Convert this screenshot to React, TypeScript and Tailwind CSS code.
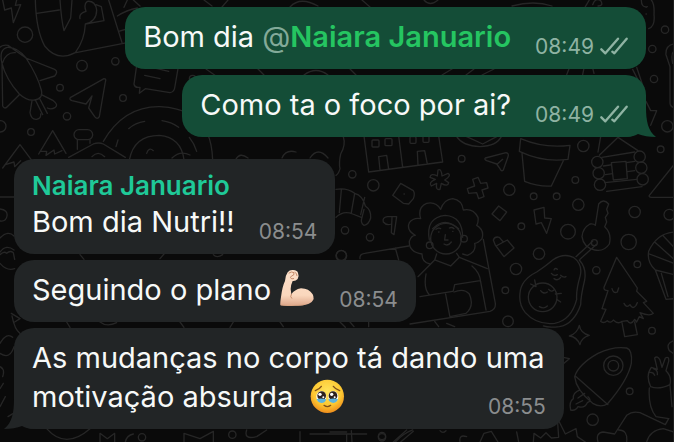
import type { ReactNode } from "react"

// doodle wallpaper behind the chat
function Wallpaper() {
  return (
    <svg
      className="absolute top-0 left-0 w-full h-full"
      viewBox="0 0 674 442"
      preserveAspectRatio="xMinYMin slice"
      fill="none"
      stroke="#262626"
      strokeLinecap="round"
      strokeLinejoin="round"
      aria-hidden="true"
    >
      {/* top left */}
      <g transform="scale(.33333)" strokeWidth="4">
        <path d="M8 0 14 30 34 24 40 68 62 14 46 16 50 0" />
        <circle cx="75" cy="104" r="23" />
        <path d="M106 0 Q108 90 134 138 Q172 186 226 158 Q254 120 256 72 M110 40 178 30 M180 0 Q184 60 192 92 L212 54 216 0 M256 72 Q290 64 290 30 Q286 2 262 4 Q250 12 258 34 Q236 40 240 56 M256 72 312 62 304 20 288 14 M228 158 382 128" />
        <path d="M326 0 366 128 M352 48 Q380 30 412 24 M356 94 390 84 M372 22 382 0 M400 0 420 18" />
        <path d="M6 190 Q-4 148 22 142 Q52 140 78 174 Q112 226 124 270 Q130 296 104 300 Q82 304 58 282 Q18 238 6 190Z M8 188 Q18 156 46 158 M-8 150 Q4 132 24 136 L78 174 164 208 Q176 214 164 228 L120 242 M6 190 8 318 Q14 330 24 318 L58 284" />
        <path d="M96 302 90 338 Q94 360 110 358 Q124 356 122 342 M106 300 128 344 M118 294 142 340 M124 284 160 302 Q176 314 166 322 Q154 330 142 324" />
        <circle cx="246" cy="197" r="16" /><circle cx="346" cy="184" r="11" />
        <circle cx="180" cy="263" r="10" /><circle cx="201" cy="349" r="11" />
        <circle cx="369" cy="294" r="10" /><circle cx="93" cy="396" r="10" />
        <circle cx="1" cy="379" r="17" /><circle cx="578" cy="236" r="10" />
        <path d="M212 292 312 236 Q320 236 316 246 L298 350 Q292 360 284 350 L266 324 276 288 258 312 216 302 Q206 298 212 292Z" />
        <path d="M410 196 402 252 Q404 262 414 262 L420 262 418 280 436 266 510 278 Q522 276 524 264 L534 206 M430 196 506 214 M434 226 480 236" />
        <path d="M310 424 Q372 318 480 320 Q590 326 622 400 Q636 430 638 480 M386 386 Q406 368 434 364 M486 362 Q514 366 536 382 M568 412 Q584 432 590 454 M348 440 354 420 M388 480 Q402 406 478 406 Q544 412 552 480 M440 460 Q446 440 460 452" />
        <rect x="222" y="389" width="56" height="30" rx="15" />
        <path d="M232 420 V448 M270 420 V430 M206 472 280 432 Q296 426 310 432 L376 472 M276 470 Q294 450 314 470" />
        <path d="M116 462 158 392 198 460 M120 454 140 454 138 466 162 450 164 462 186 452 M8 504 60 434 102 490 M16 494 42 486 44 500 62 482" />
      </g>

      {/* right side, top */}
      <g transform="translate(554) scale(.33333)" strokeWidth="4">
        <path d="M94 20 106 0 M116 14 Q124 -8 140 2 Q150 18 132 18 M262 0 Q262 24 280 20 M284 86 Q304 78 300 44 Q302 12 292 0 M276 42 h1 M276 22 h1" />
        <circle cx="333" cy="89" r="11" /><circle cx="295" cy="147" r="11" />
        <circle cx="300" cy="237" r="11" /><circle cx="340" cy="379" r="17" />
        <circle cx="320" cy="448" r="10" />
        <path d="M360 132 Q334 136 336 164 L348 200 V310 Q350 322 360 322 M360 154 Q350 158 356 190" />
        <path d="M236 208 262 260 M248 202 264 250 M276 304 290 332 308 332 290 376" />
        <path d="M38 224 46 204 M86 224 90 204 M116 204 120 220" />
      </g>

      {/* strip between the sent bubbles and above them */}
      <path strokeWidth="1.3" d="M204 0 212 6 M228 0 222 7 M290 7 Q300 -4 318 6 M362 0 370 7 M424 0 Q430 7 438 0 M512 6 Q534 0 552 6 M206 69 216 76 M258 69 264 75 M304 75 Q316 66 328 75 M350 69 356 75 M442 75 452 69 M466 75 474 69 M482 75 494 69" />

      {/* right half under the sent bubbles */}
      <g transform="translate(330 130) scale(.33333)" strokeWidth="4">
        <path d="M40 20 Q48 44 32 72 Q26 100 30 116 Q26 132 18 136" />
        <path d="M102 18 116 126 338 96 326 18 M206 18 218 112 M150 120 146 80 170 76 176 118 M264 106 262 64 284 62 292 102" />
        <rect x="126" y="30" width="21" height="21" rx="3" /><rect x="165" y="26" width="21" height="21" rx="3" />
        <rect x="240" y="20" width="18" height="20" rx="3" /><rect x="279" y="16" width="18" height="21" rx="3" />
        <path d="M380 20 Q398 48 450 50 Q500 48 514 20 M410 20 458 42 500 20" />
        <path d="M466 84 528 68 Q538 70 534 80 L520 120 Q514 126 510 116 L500 102 470 92 Q462 88 466 84Z M502 102 518 88" />
        <path d="M572 26 568 64 Q640 98 714 88 L720 46 Q642 56 572 26Z M576 70 584 154 Q622 170 664 168 L700 92" />
        <path d="M804 66 812 20 M808 76 864 22 924 62 M816 82 914 66 M820 108 914 94 M826 134 914 122 M824 158 920 148 M830 184 936 170" />
        <circle cx="802" cy="96" r="17" /><circle cx="806" cy="130" r="17" /><circle cx="810" cy="164" r="17" />
        <circle cx="929" cy="80" r="17" /><circle cx="934" cy="113" r="17" /><circle cx="938" cy="148" r="17" />
        <path fill="#0a0a0a" d="M844 98 888 94 892 146 850 150Z" />
        <path d="M1032 104 958 196 Q956 202 964 202 H1032" />
        <path d="M324 120 Q334 114 336 138 L354 130 Q366 136 344 150 L356 158 Q354 172 334 160 L330 178 Q316 182 320 160 L304 168 Q294 158 316 148 L300 142 Q302 128 322 138Z" />
        <path d="M428 148 444 142 452 160 470 158 474 174 456 180 462 200 446 206 440 188 416 190 412 176 434 168Z" />
        <path d="M188 196 212 160 250 182 Q256 192 250 206 L236 222 220 220Z M222 192 h1" />
        <path d="M506 228 530 246 510 272 486 252Z" />
        <path d="M498 348 532 330 552 354 522 380Z M496 346 490 330 Q494 318 508 322 L520 336" />
        <path d="M612 240 642 232 644 264 664 266 650 310 634 278 618 282Z" />
        <circle cx="395" cy="86" r="10" /><circle cx="67" cy="133" r="11" /><circle cx="130" cy="166" r="17" />
        <circle cx="538" cy="179" r="17" /><circle cx="611" cy="199" r="10" /><circle cx="680" cy="199" r="10" />
        <circle cx="745" cy="224" r="17" /><circle cx="736" cy="150" r="10" /><circle cx="760" cy="48" r="17" />
        <circle cx="574" cy="289" r="10" /><circle cx="714" cy="305" r="22" /><circle cx="627" cy="371" r="17" />
        <circle cx="558" cy="417" r="17" /><circle cx="526" cy="481" r="10" /><circle cx="534" cy="574" r="16" />
        <circle cx="799" cy="421" r="11" /><circle cx="896" cy="336" r="23" /><circle cx="914" cy="246" r="17" />
        <circle cx="922" cy="403" r="10" /><circle cx="966" cy="602" r="10" /><circle cx="45" cy="301" r="11" />
        <circle cx="120" cy="322" r="11" /><circle cx="34" cy="376" r="15" /><circle cx="788" cy="869" r="17" />
        <circle cx="899" cy="784" r="10" /><circle cx="1018" cy="254" r="16" />
        {/* croissant */}
        <path d="M18 178 Q50 172 74 190 Q98 196 106 228 Q124 240 122 264 Q116 284 102 286 Q90 280 96 262 L102 238 M74 190 64 248 M34 180 28 248 M104 202 92 254 M18 262 Q40 240 68 252 L94 262" />
        <path d="M200 260 192 314 184 308 186 262 M200 260 172 260 Q156 262 160 276 Q170 288 184 282" />
        {/* woman with laptop */}
        <path d="M276 372 Q236 366 238 334 Q244 316 256 316 Q228 300 238 278 Q250 262 272 266 Q262 232 290 220 Q318 214 332 238 Q342 208 368 206 Q396 210 400 240 Q430 234 444 262 Q446 278 440 286 Q464 300 456 326 Q444 340 434 340 Q440 366 412 376 M276 372 Q276 398 300 402 M412 376 398 372" />
        <circle cx="348" cy="326" r="46" />
        <path d="M298 330 Q286 262 346 256 Q398 260 398 322 M308 296 Q344 258 386 296 M326 306 h1 M368 304 h1 M318 298 q8 -6 14 -2 M358 294 q8 -4 14 2 M346 314 344 330 354 330 M342 342 Q354 350 364 336" />
        <circle cx="299" cy="346" r="10" /><circle cx="402" cy="326" r="10" />
        <path d="M320 372 314 390 264 440 M380 370 388 382 472 416 M314 390 362 408 388 382 M288 432 Q280 476 298 494 M426 408 Q450 428 452 456 L468 540 M270 500 368 484 M370 482 374 464 450 452 M346 488 360 562 M372 486 Q402 474 418 492 Q434 528 408 550 L360 560" />
        <path d="M460 328 496 520 Q498 538 480 544 L240 582 M90 386 Q88 372 104 370 L236 348 M196 354 206 390" />
        {/* avocado */}
        <path d="M570 490 Q572 450 620 426 Q650 406 668 390 Q700 368 730 382 Q760 404 750 440 Q738 480 740 508 Q724 570 674 580 Q620 586 586 548 Q566 524 570 490Z M748 390 Q770 414 764 450 Q752 500 752 524 Q732 582 688 590 Q656 594 640 588" />
        <circle cx="638" cy="502" r="43" />
        <path d="M602 462 618 470 614 450 M676 492 694 490 M680 508 692 516 M632 482 q8 12 20 4 M656 478 q8 10 16 2 M628 530 q14 8 24 -2 M664 430 q8 10 18 4 M682 418 q-6 -6 -10 2 M672 446 q12 8 20 -4 M692 436 q8 8 16 4" />
        {/* key */}
        <path d="M796 286 806 222 Q820 204 836 222 L830 238 834 250 826 262 830 276 824 290 Q846 310 838 342 Q822 366 794 360 Q760 352 756 320 Q758 294 780 282 Q790 280 796 286Z M788 334 738 380 M798 344 750 388" />
        <circle cx="793" cy="338" r="9" />
        {/* pine */}
        <path d="M860 382 822 472 Q820 482 834 482 L816 536 828 538 812 574 Q820 582 832 572 Q842 582 850 570 Q864 584 876 574 L892 572 Q902 588 914 568 L920 576 928 560 940 566 930 548 Q960 560 970 550 L940 518 950 514 920 484 922 474Z M876 578 884 620 922 614 914 576 M846 476 Q850 492 862 486 L866 474 M882 520 Q890 536 900 524 Q908 540 918 526 L922 518" />
        <path d="M748 586 Q752 610 778 616 Q754 622 750 644 Q740 620 718 618 Q742 610 748 586Z M700 682 718 686 702 700" />
        {/* rocket */}
        <path d="M734 740 Q744 704 804 670 Q850 648 890 654 Q908 660 904 700 Q894 750 832 822 Q812 834 788 820 Q738 780 734 740Z M736 738 834 824 M750 780 Q728 788 730 806 Q716 816 722 840 Q736 844 744 830 Q764 836 772 818 Q788 812 774 800 M744 804 764 790 M738 822 758 812" />
        <circle cx="850" cy="707" r="29" /><circle cx="850" cy="707" r="16" />
        {/* shell */}
        <path d="M1032 306 Q980 310 956 364 Q950 396 976 420 L1008 508 1032 506 M976 420 1032 434 M958 372 1032 400 M974 336 1030 386 M1000 318 1032 352 M994 430 1014 500" />
        {/* hand */}
        <path d="M962 770 Q946 736 964 712 L982 718 974 684 Q982 676 990 690 L996 712 1006 684 Q1018 678 1016 694 L1008 722 Q1026 740 1020 764 Q986 780 962 770Z M956 728 q14 -4 18 8 M970 716 q14 4 12 18 M958 774 Q954 830 978 860 L1016 866 M1020 766 1026 830 M1032 632 Q1006 640 1018 662 L1032 672" />
        <path d="M804 936 Q796 908 820 906 L854 912 890 856 Q908 842 930 848 L1006 884 1016 866 M866 900 Q894 900 890 936 M950 936 Q960 900 1000 896 L1032 906 M610 936 612 910 632 924 648 908 664 924 686 922 682 864 706 912 738 896 742 920 766 936" />
        <path d="M0 906 50 906 M64 902 66 936 M196 936 Q220 910 248 900 M212 936 250 904 M330 902 q8 10 18 0 M390 936 Q386 912 410 920 M450 936 462 910 484 904 504 936 M560 906 566 936" />
        <circle cx="156" cy="918" r="11" />
        <path d="M60 576 72 590 M116 576 V590 M314 574 326 590 M350 580 374 590" />
      </g>

      {/* left edge and the gaps between received bubbles */}
      <g transform="translate(0 250) scale(.33333)" strokeWidth="4">
        <path d="M0 14 Q12 2 20 10 Q30 0 40 8 L44 28 M0 40 Q20 64 44 56 M34 190 60 206 44 216 M36 198 Q44 240 60 250 M0 280 Q20 246 38 262 M0 310 Q30 330 42 290 M0 350 Q16 358 8 380 M0 470 16 440 M0 416 10 400 M24 500 40 490" />
        <path d="M140 536 Q196 600 270 536 M300 576 V550 L322 566 344 550 V576 M376 576 Q380 556 400 552 M552 576 V550 L600 566 640 544 V576 M740 540 Q730 570 770 560 L800 540 M900 576 V545 M930 552 H1100 M1040 552 V576 M1180 576 1220 540" />
        <circle cx="426" cy="562" r="11" /><circle cx="697" cy="554" r="11" /><circle cx="1146" cy="562" r="11" />
        <path d="M200 216 210 232 M300 216 Q320 232 350 218 M540 216 552 232 M690 232 700 216 M840 216 850 230 M1020 216 1036 232 M240 14 252 28 M480 26 492 12 M640 14 Q650 26 668 14" />
        <circle cx="1024" cy="18" r="16" />
      </g>
      <path strokeWidth="1.3" d="M0 197 H14 M0 209 Q8 210 7 216 Q6 222 0 221 M0 238 Q8 230 14 236 M0 252 Q6 244 14 250 M172 158 Q180 150 190 155 M236 159 Q240 152 248 158 M282 158 Q286 149 296 152 M310 158 Q318 146 328 158" />
    </svg>
  )
}

function Checks() {
  return (
    <svg className="inline-block w-7 h-[18px] ml-[6px] align-[-1px]" viewBox="0 0 84 54" fill="none" stroke="currentColor" strokeWidth="7" strokeLinecap="round" strokeLinejoin="round" role="img" aria-label="Entregue">
      <path d="M4 37 16 49 54 5 M37 44 43 49 80 5" />
    </svg>
  )
}

function Biceps() {
  return (
    <svg className="inline-block w-[36px] h-[38px] -my-2 align-[1px]" viewBox="0 0 108 114" role="img" aria-label="Braço forte">
      <defs>
        <linearGradient id="skin" x1="0" y1="0" x2="0" y2="1">
          <stop offset="0" stopColor="#fbe0ca" />
          <stop offset=".7" stopColor="#fad7bd" />
          <stop offset="1" stopColor="#dca588" />
        </linearGradient>
      </defs>
      <path fill="url(#skin)" d="M4 109 Q3 103 6 84 Q10 52 18 36 Q19 20 26 10 Q32 2 42 3 Q56 4 57 12 Q61 20 56 30 Q50 37 41 36 Q35 48 35 60 L37 76 Q46 62 66 58 Q90 58 101 76 Q108 90 98 99 Q80 112 50 110 Q20 113 4 109Z" />
      <path fill="none" stroke="#c68c6c" strokeWidth="3" strokeLinecap="round" d="M30 12 Q38 6 45 11 L44 18 Q36 20 34 26 Q38 32 44 29 M48 10 Q54 12 54 20 M37 76 Q32 84 38 88" />
      <path fill="none" stroke="#d6a17f" strokeWidth="2" d="M6 108 Q50 112 78 106" />
    </svg>
  )
}

function TearyFace() {
  return (
    <svg className="inline-block w-[35px] h-[35px] -my-2 align-[1px]" viewBox="0 0 105 105" role="img" aria-label="Rosto segurando as lágrimas">
      <defs>
        <radialGradient id="face" cx=".5" cy=".35" r=".65">
          <stop offset="0" stopColor="#ffe45c" />
          <stop offset=".65" stopColor="#fdc832" />
          <stop offset="1" stopColor="#ee8d1c" />
        </radialGradient>
      </defs>
      <circle cx="52" cy="52" r="50" fill="url(#face)" />
      <ellipse cx="34" cy="53" rx="15" ry="17" fill="#fff" />
      <ellipse cx="70" cy="53" rx="15" ry="17" fill="#fff" />
      <circle cx="35" cy="50" r="13" fill="#2d211d" />
      <circle cx="69" cy="50" r="13" fill="#2d211d" />
      <path fill="#5fb4dc" d="M20 60 Q34 56 49 61 Q46 72 34 72 Q23 71 20 60Z M55 61 Q70 56 84 60 Q81 71 70 72 Q58 71 55 61Z" />
      <circle cx="30" cy="46" r="5" fill="#fff" />
      <circle cx="65" cy="46" r="5" fill="#fff" />
      <circle cx="40" cy="55" r="3" fill="#fff" />
      <circle cx="74" cy="55" r="3" fill="#fff" />
      <path fill="none" stroke="#80501a" strokeWidth="4" strokeLinecap="round" d="M16 35 Q28 31 34 22 M70 22 Q77 31 89 35 M42 79 Q52 87 62 79" />
    </svg>
  )
}

type BubbleProps = {
  time: string
  sent?: boolean
  tail?: boolean
  author?: string
  children: ReactNode
}

function Bubble({ time, sent, tail, author, children }: BubbleProps) {
  return (
    <div
      className={
        sent
          ? "relative self-end max-w-[87%] rounded-[20px] bg-[#144d37] px-[18px] pt-[10px] pb-[13px]"
          : "relative self-start max-w-[87%] rounded-[20px] bg-[#222526] px-[18px] pt-[10px] pb-[13px]"
      }
    >
      {tail && (
        <svg
          className={
            sent
              ? "absolute bottom-0 -right-[10px] w-8 h-[30px] text-[#144d37]"
              : "absolute bottom-0 -left-[10px] w-8 h-[30px] text-[#222526] -scale-x-100"
          }
          viewBox="0 0 32 30"
          fill="currentColor"
          aria-hidden="true"
        >
          <path d="M22 0C22 14 24 24 32 30C25 30 19 29 14 27C11 29 6 30 0 30V0Z" />
        </svg>
      )}
      {author && <h2 className="relative text-[26px] leading-[33px] font-semibold text-[#1fc998]">{author}</h2>}
      <p className="relative text-[29px] leading-[39px] text-[#f7f9f8]">
        {children}
        {/* negative bottom margin keeps the stamp from stretching the bubble */}
        <span
          className={
            sent
              ? "float-right ml-6 mt-[17px] -mb-1 text-[21px] leading-[25px] whitespace-nowrap text-[#8fb3a3]"
              : "float-right ml-6 mt-[17px] -mb-1 text-[21px] leading-[25px] whitespace-nowrap text-[#8b8d8e]"
          }
        >
          <time>{time}</time>
          {sent && <Checks />}
        </span>
      </p>
    </div>
  )
}

export default function App() {
  return (
    <main className="relative min-h-screen overflow-hidden border-r border-[#1d1d1d] bg-[#0a0a0a] font-['Inter','Liberation_Sans',sans-serif]">
      <Wallpaper />
      <div className="relative flex flex-col gap-[22px] pt-[7px] pr-[27px] pb-3 pl-[14px]">
        <section className="flex flex-col gap-[6px]">
          <Bubble sent time="08:49">
            Bom dia <span className="text-[#83aa99]">@</span>
            <a href="#naiara" className="font-semibold text-[#25c561]">Naiara Januario</a>
          </Bubble>
          <Bubble sent tail time="08:49">Como ta o foco por ai?</Bubble>
        </section>

        <section className="flex flex-col gap-[6px]">
          <Bubble author="Naiara Januario" time="08:54">Bom dia Nutri!!</Bubble>
          <Bubble time="08:54">
            Seguindo o plano <Biceps />
          </Bubble>
          <Bubble tail time="08:55">
            As mudanças no corpo tá dando uma motivação absurda &nbsp;<TearyFace />
          </Bubble>
        </section>
      </div>
    </main>
  )
}
